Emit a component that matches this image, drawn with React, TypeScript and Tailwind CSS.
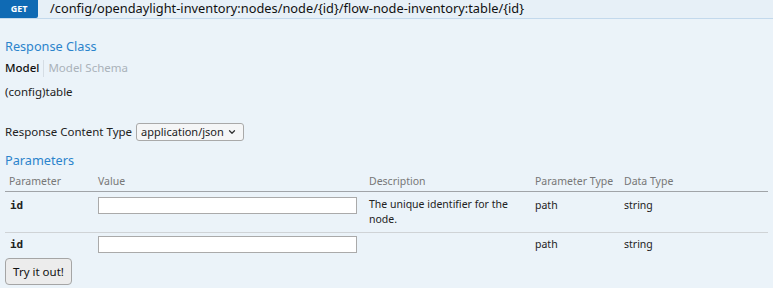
import { ChevronDown } from 'lucide-react';

const params = [
  { name: 'id', description: 'The unique identifier for the node.', paramType: 'path', dataType: 'string' },
  { name: 'id', description: '', paramType: 'path', dataType: 'string' },
];

const cols = 'grid grid-cols-[89px_271px_166px_89px_1fr]';

export default function App() {
  return (
    <div className="w-[773px] h-[288px] overflow-hidden bg-[#ebf3f9] text-[11.5px] text-[#222] font-['Noto_Sans',sans-serif]">
      {/* operation heading */}
      <div className="flex items-center h-[19px] bg-[#e7f0f7] border-b border-[#c3d9ec]">
        <div className="w-[38px] h-full flex items-center justify-center bg-[#0f6ab4] text-white text-[9px] font-bold rounded-br-[2px]">
          GET
        </div>
        <div className="ml-[12px] text-[12.8px] leading-[16px] text-[#111] -mt-[3px]">
          /config/opendaylight-inventory:nodes/node/{'{id}'}/flow-node-inventory:table/{'{id}'}
        </div>
      </div>

      <div className="px-[5px]">
        <h4 className="mt-[18px] text-[12.7px] leading-[18px] text-[#2b84cc]">Response Class</h4>

        <div className="mt-[4px] flex items-center h-[18px]">
          <span className="text-[#111] font-medium">Model</span>
          <span className="mx-[4px] w-px h-[17px] bg-[#d5dde4]" />
          <span className="text-[#aab2b9]">Model Schema</span>
        </div>
        <div className="mt-[6px] leading-[18px]">(config)table</div>

        <div className="mt-[22px] flex items-center h-[18px]">
          <span>Response Content Type</span>
          <div className="ml-[4px] h-[18px] w-[108px] flex items-center justify-between pl-[4px] pr-[6px] bg-[#f5f6f7] border border-[#a9a9a9] rounded-[3px] text-[11px]">
            <span>application/json</span>
            <ChevronDown size={10} strokeWidth={3} className="text-[#333]" />
          </div>
        </div>

        <h4 className="mt-[10px] text-[12.7px] leading-[18px] text-[#2b84cc]">Parameters</h4>

        <div className={`${cols} mt-[3px] h-[20px] items-center border-b border-[#a0a4a8] text-[#777] text-[10.5px]`}>
          <div className="pl-[4px]">Parameter</div>
          <div className="pl-[4px]">Value</div>
          <div className="pl-[4px]">Description</div>
          <div className="pl-[4px]">Parameter Type</div>
          <div className="pl-[4px]">Data Type</div>
        </div>

        {params.map((p, i) => (
          <div
            key={i}
            className={`${cols} items-start text-[10.5px] ${i === 0 ? 'h-[41px] border-b border-[#cfd3d6] pt-[5px]' : 'h-[24px] pt-[3px]'}`}
          >
            <div className="pl-[5px] font-['DejaVu_Sans_Mono',monospace] font-bold text-[11px] leading-[17px]">{p.name}</div>
            <div className="pl-[4px]">
              <input className="block w-[259px] h-[17px] bg-white border border-[#aaaaaa] outline-none" />
            </div>
            <div className="pl-[4px] w-[150px] leading-[15px]">{p.description}</div>
            <div className="pl-[4px] leading-[17px]">{p.paramType}</div>
            <div className="pl-[4px] leading-[17px]">{p.dataType}</div>
          </div>
        ))}

        <button className="mt-[1px] w-[67px] h-[27px] bg-[#ececec] border border-[#a5a5a5] rounded-[4px] text-[11.5px] text-[#111]">
          Try it out!
        </button>
      </div>
    </div>
  );
}
